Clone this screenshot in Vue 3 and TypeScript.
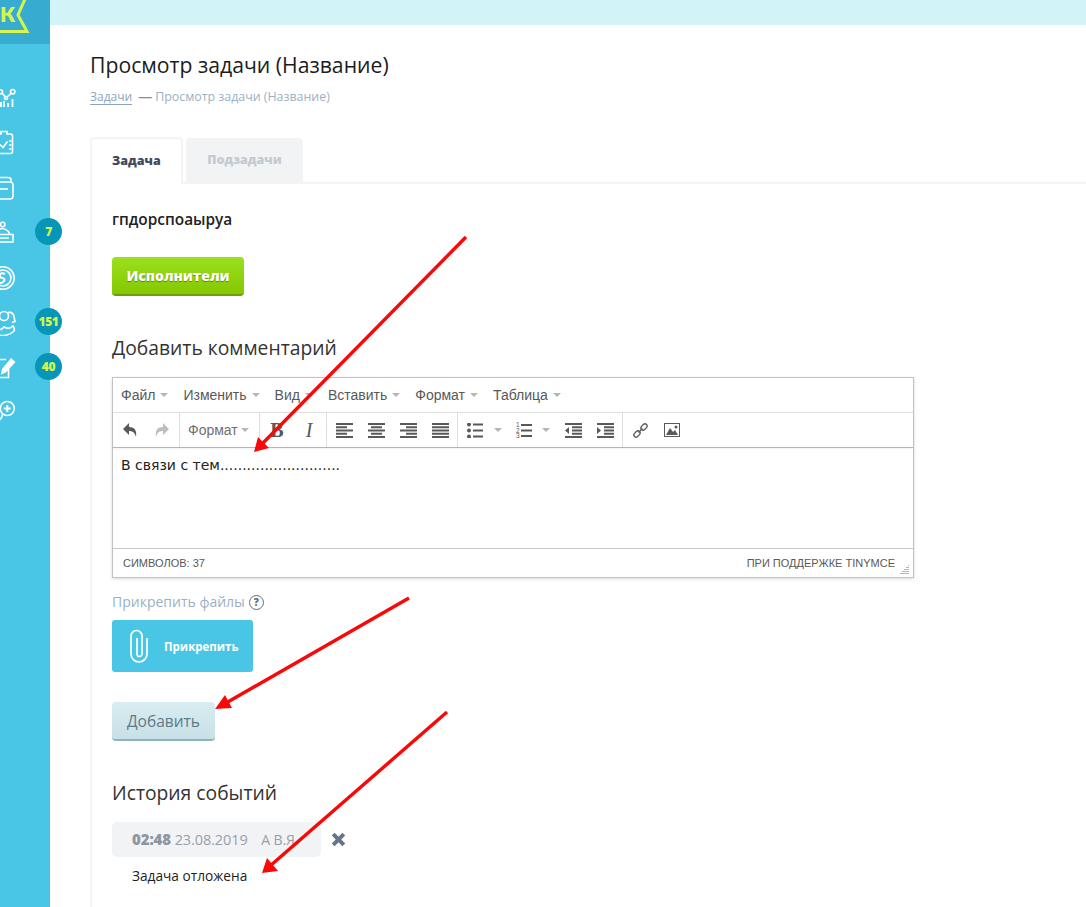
<script setup lang="ts">
const menus: string[] = ['Файл', 'Изменить', 'Вид', 'Вставить', 'Формат', 'Таблица']
const navBadges: Array<{ id: string; badge?: string }> = [
  { id: 'chart' }, { id: 'task' }, { id: 'box' }, { id: 'desk', badge: '7' },
  { id: 'coin' }, { id: 'people', badge: '151' }, { id: 'edit', badge: '40' }, { id: 'plus' },
]
const alignRows: Record<string, number[][]> = {
  left: [[0, 17], [0, 11], [0, 17], [0, 11], [0, 17]],
  center: [[0, 17], [3, 11], [0, 17], [3, 11], [0, 17]],
  right: [[0, 17], [6, 11], [0, 17], [6, 11], [0, 17]],
  full: [[0, 17], [0, 17], [0, 17], [0, 17], [0, 17]],
}
</script>

<template>
  <div class="page">
    <aside class="side">
      <div class="logo">
        <svg width="50" height="44" viewBox="0 0 50 44">
          <path d="M-8 31.500H27L18 15L25 -1" fill="none" stroke="#d6f64a" stroke-width="3" />
          <text x="0" y="22" class="logo-k">К</text>
        </svg>
      </div>
      <nav class="nav">
        <div v-for="n in navBadges" :key="n.id" class="nav-item">
          <svg class="nav-icon" width="26" height="26" viewBox="0 0 26 26" fill="none" stroke="#fff" stroke-width="1.6">
            <template v-if="n.id === 'chart'">
              <circle cx="22.700" cy="6.700" r="2.200" /><circle cx="10.500" cy="6.700" r="2" /><circle cx="16" cy="13" r="1.500" />
              <path d="M12 8l3 3.500M17 12l4.500-4" />
              <path d="M11 22v-5M14 22v-6M18 22v-4M22.500 22v-8" stroke-width="1.800" />
            </template>
            <template v-else-if="n.id === 'task'">
              <path d="M8 4h3V1.500h6V4h3.500q2 0 2 2v15.500q0 2-2 2H8" />
              <path d="M10 14.500l3 3 4.500-6M19 11h2.500M19 15h2.500M19 19h2.500" />
            </template>
            <template v-else-if="n.id === 'box'">
              <path d="M8 2.500H18q3 0 3 2.500V7" />
              <path d="M8 7H20q3 0 3 3V21q0 3-3 3H6" />
              <path d="M8 14H18" />
            </template>
            <template v-else-if="n.id === 'desk'">
              <circle cx="12.700" cy="4.500" r="2.200" />
              <path d="M6 11q6-5 12 0l2 3.500M4 14.500H23V22H4M7 18H19" />
            </template>
            <template v-else-if="n.id === 'coin'">
              <circle cx="13" cy="13" r="11.200" /><circle cx="13" cy="13" r="8" />
              <path d="M15 9q-4-2-5 1t3 3q3 2 0 4t-4 0" stroke-width="2" />
            </template>
            <template v-else-if="n.id === 'people'">
              <circle cx="14" cy="6" r="4.500" />
              <path d="M18 2.500q5-1 6 4l1 5-3 1" />
              <path d="M6 19q5 2 8-2 5 3 9-1 2 2 1 5-4 4-10 4.500-4 .5-8-1.500" />
            </template>
            <template v-else-if="n.id === 'edit'">
              <path d="M16 4.500H5M18.500 14V22.500H6" />
              <path d="M21 3L25.500 7L16 17.500L11 19.500L12 14z" fill="#fff" stroke="none" />
            </template>
            <template v-else>
              <circle cx="17.300" cy="8.500" r="7" />
              <path d="M17.300 5v7M13.800 8.500h7" stroke-width="2" />
              <path d="M12.500 14Q12 22 0 22" />
            </template>
          </svg>
          <span v-if="n.badge" class="badge">{{ n.badge }}</span>
        </div>
      </nav>
    </aside>

    <div class="main">
      <div class="topbar"></div>
      <div class="content">
        <h1 class="title">Просмотр задачи (Название)</h1>
        <div class="crumbs"><a class="crumb-link">Задачи</a><span class="crumb-dash">—</span><span>Просмотр задачи (Название)</span></div>

        <div class="tabs">
          <div class="tab active">Задача</div>
          <div class="tab">Подзадачи</div>
        </div>
        <div class="panel">
          <div class="task-name">гпдорспоаыруа</div>
          <button class="btn-green">Исполнители</button>
          <h2 class="h2 h-comment">Добавить комментарий</h2>

          <div class="editor">
            <div class="menubar">
              <span v-for="m in menus" :key="m" class="menu">{{ m }}<i class="caret"></i></span>
            </div>
            <div class="toolbar">
              <div class="group">
                <span class="tb"><svg width="16" height="16" viewBox="0 0 16 16"><path d="M7 1L1 7l6 6V9c4 0 6 2 7 6 1-6-1-10-7-10z" fill="#595959" /></svg></span>
                <span class="tb"><svg width="16" height="16" viewBox="0 0 16 16"><path d="M9 1l6 6-6 6V9c-4 0-6 2-7 6-1-6 1-10 7-10z" fill="#bdbdbd" /></svg></span>
              </div>
              <div class="group fmt"><span class="fmt-label">Формат</span><i class="caret"></i></div>
              <div class="group">
                <span class="tb letter bold">B</span>
                <span class="tb letter ital">I</span>
              </div>
              <div class="group">
                <span v-for="(rows, name) in alignRows" :key="name" class="tb">
                  <svg width="17" height="15" viewBox="0 0 17 15"><rect v-for="(r, i) in rows" :key="i" :x="r[0]" :y="i * 3.25" :width="r[1]" height="2" fill="#595959" /></svg>
                </span>
              </div>
              <div class="group">
                <span class="tb"><svg width="16" height="15" viewBox="0 0 16 15" fill="#595959"><circle cx="2" cy="1.500" r="2" /><circle cx="2" cy="7.500" r="2" /><circle cx="2" cy="13.500" r="2" /><rect x="6" y=".5" width="10" height="2" /><rect x="6" y="6.500" width="10" height="2" /><rect x="6" y="12.500" width="10" height="2" /></svg></span>
                <i class="caret c-bullet"></i>
                <span class="tb num"><svg width="16" height="16" viewBox="0 0 16 16" fill="#595959"><rect x="5" y="2" width="11" height="2" /><rect x="5" y="7.500" width="11" height="2" /><rect x="5" y="13" width="11" height="2" /><text x="0" y="5" class="mini">1</text><text x="0" y="10.500" class="mini">2</text><text x="0" y="16" class="mini">3</text></svg></span>
                <i class="caret c-num"></i>
                <span class="tb outdent"><svg width="17" height="15" viewBox="0 0 17 15" fill="#595959"><rect width="17" height="2" /><rect x="7" y="3.250" width="10" height="2" /><rect x="7" y="6.500" width="10" height="2" /><rect x="7" y="9.750" width="10" height="2" /><rect y="13" width="17" height="2" /><path d="M4 4v7L0 7.500z" /></svg></span>
                <span class="tb"><svg width="17" height="15" viewBox="0 0 17 15" fill="#595959"><rect width="17" height="2" /><rect x="7" y="3.250" width="10" height="2" /><rect x="7" y="6.500" width="10" height="2" /><rect x="7" y="9.750" width="10" height="2" /><rect y="13" width="17" height="2" /><path d="M0 4v7l4-3.500z" /></svg></span>
              </div>
              <div class="group last">
                <span class="tb"><svg width="17" height="17" viewBox="0 0 17 17" fill="none" stroke="#595959" stroke-width="1.300"><rect x="-3.500" y="-2.200" width="7" height="4.400" rx="2.200" transform="translate(5 12) rotate(-45)" /><rect x="-3.500" y="-2.200" width="7" height="4.400" rx="2.200" transform="translate(12 5) rotate(-45)" /><path d="M6.500 10.500l4-4" /></svg></span>
                <span class="tb"><svg width="16" height="14" viewBox="0 0 16 14"><rect x=".5" y=".5" width="15" height="13" fill="#fff" stroke="#595959" /><path d="M2 12l4-7 3 4 2-2 3 5z" fill="#595959" /><circle cx="12" cy="4" r="1.500" fill="#595959" /></svg></span>
              </div>
            </div>
            <div class="edit-area">В связи с тем...........................</div>
            <div class="status">
              <span>СИМВОЛОВ: 37</span>
              <span class="powered">ПРИ ПОДДЕРЖКЕ TINYMCE</span>
              <svg class="grip" width="10" height="10" viewBox="0 0 10 10" stroke="#b5b5b5"><path d="M8 1.500h1M6 3.500h3M4 5.500h5M2 7.500h7M0 9.500h9" /></svg>
            </div>
          </div>

          <div class="attach-label">Прикрепить файлы<span class="help">?</span></div>
          <button class="btn-attach">
            <svg width="20" height="36" viewBox="0 0 20 36" fill="none" stroke="#fff" stroke-width="1.700"><path d="M18 10V26a8 8 0 0 1-16 0V8a5.500 5.500 0 0 1 11 0V26a2.500 2.500 0 0 1-5 0V10" /></svg>
            <span>Прикрепить</span>
          </button>
          <button class="btn-add">Добавить</button>

          <h2 class="h2 h-history">История событий</h2>
          <div class="event">
            <div class="event-chip"><b>02:48</b> 23.08.2019 <span class="who">А В.Я.</span></div>
            <svg class="x" width="15" height="15" viewBox="0 0 15 15"><path d="M2.200 2.200l10.600 10.600M12.800 2.200L2.200 12.800" stroke="#66758a" stroke-width="4" /></svg>
          </div>
          <div class="event-text">Задача отложена</div>
        </div>
      </div>
    </div>

    <svg class="arrows" width="1086" height="907" viewBox="0 0 1086 907">
      <g stroke="#f80808" stroke-width="3.400">
        <path d="M466 237L262 444" />
        <path d="M409 598L226 703" />
        <path d="M447 712L270 866" />
      </g>
      <g fill="#f80808">
        <path d="M254 452L258 437L269 448z" />
        <path d="M215 709L225 695L232 708z" />
        <path d="M262 873L267 858L278 871z" />
      </g>
    </svg>
  </div>
</template>

<style>
html, body { margin: 0; background: #fff; }
</style>

<style scoped>
.page {
  position: relative;
  display: flex;
  width: 1086px;
  height: 907px;
  overflow: hidden;
  font-family: "Open Sans", "Noto Sans", sans-serif;
  background: #fff;
}
.side { width: 50px; flex: none; background: #49c6e5; position: relative; }
.logo { height: 44px; background: #38abd0; overflow: hidden; }
.logo svg { display: block; overflow: hidden; }
.logo-k { font: 800 21px "Lato", "Open Sans", sans-serif; fill: #d6f64a; }
.nav { padding-top: 31px; }
.nav-item { height: 45px; display: flex; align-items: center; position: relative; }
.nav-icon { margin-left: -10px; flex: none; }
.badge {
  position: absolute; left: 35px; top: 8px;
  width: 27px; height: 27px; border-radius: 50%;
  background: #0796b8; color: #d6f64a;
  display: flex; align-items: center; justify-content: center;
  font-size: 12px; font-weight: 800; letter-spacing: -.4px;
}
.main { flex: 1; min-width: 0; }
.topbar { height: 25px; background: #d2f3f7; }
.content { padding: 0 0 0 40px; }
.title { margin: 25px 0 0; font-size: 21.200px; line-height: 29px; font-weight: 400; color: #1c1c1c; }
.crumbs { margin-top: 8px; height: 20px; font-size: 12.400px; line-height: 19px; color: #9bb0c6; display: flex; }
.crumb-link { color: #8fa5bd; border-bottom: 1px solid #8fa5bd; height: 17px; font-size: 12px; }
.crumb-dash { margin: 0 3px 0 6px; color: #7f8c99; font-size: 14px; }
.tabs { display: flex; gap: 3px; margin-top: 29px; align-items: flex-end; }
.tab {
  height: 45px; box-sizing: border-box; padding: 0 21.500px 2px;
  background: #f1f3f5; border-radius: 4px 4px 0 0;
  font-size: 12.500px; font-weight: 800; color: #c3cad1;
  display: flex; align-items: center;
}
.tab.active {
  background: #fff; color: #414a5e; height: 47px;
  border: 2px solid #f3f4f5; border-bottom: 0; padding: 0 20px 2px;
  position: relative; top: 1px;
}
.panel { border-top: 2px solid #f3f4f5; border-left: 2px solid #f3f4f5; padding: 0 0 60px 20px; margin-top: -1px; }
.task-name { margin-top: 26px; font-size: 15.400px; line-height: 20px; font-weight: 600; color: #222; }
.btn-green {
  display: block; margin-top: 27px; width: 132px; height: 39px; padding: 0;
  border: 0; border-radius: 4px; border-bottom: 2px solid #6d9e05;
  background: linear-gradient(#9be01d, #84c802);
  color: #fff; font: 800 14px "Open Sans", sans-serif; text-shadow: 0 1px 1px rgba(0,0,0,.35);
}
.h2 { margin: 0; font-size: 19.300px; line-height: 26px; font-weight: 400; color: #333; }
.h-comment { margin-top: 39px; }
.editor {
  margin-top: 16px; width: 802px; box-sizing: border-box;
  border: 1px solid #c2c2c2; box-shadow: 0 1px 3px rgba(0,0,0,.15);
  font-family: "Liberation Sans", Arial, sans-serif; color: #595959;
}
.menubar { height: 34px; border-bottom: 1px solid #dedede; display: flex; align-items: center; padding-left: 8px; gap: 15px; font-size: 14px; }
.menu { display: inline-flex; align-items: center; }
.caret { display: inline-block; width: 0; height: 0; border: 4.500px solid transparent; border-top: 4.500px solid #b5b5b5; border-bottom: 0; margin-left: 5px; }
.toolbar { height: 34px; border-bottom: 1px solid #b5b5b5; display: flex; box-shadow: 0 1px 2px rgba(0,0,0,.06); }
.group { display: flex; align-items: center; border-right: 1px solid #dedede; padding: 0 1px; }
.group.last { border-right: 0; }
.tb { width: 32px; height: 34px; display: flex; align-items: center; justify-content: center; }
.tb.num { width: 30px; margin-left: 7.500px; }
.tb.outdent { margin-left: 7.500px; }
.c-bullet, .c-num { margin-left: 2.500px; }
.fmt { width: 80px; padding: 0 0 0 8px; box-sizing: border-box; font-size: 14px; color: #707070; }
.fmt .caret { margin-left: 3px; }
.letter { font: 20px "Liberation Serif", serif; color: #595959; }
.bold { font-weight: 700; }
.ital { font-style: italic; }
.mini { font: 6.500px "Liberation Sans", sans-serif; }
.edit-area { height: 101px; box-sizing: border-box; padding: 8px; font: 14px/19px "DejaVu Sans", Verdana, sans-serif; color: #222; border-bottom: 1px solid #c9c9c9; }
.status { height: 28px; display: flex; align-items: center; justify-content: space-between; padding: 0 10px; font-size: 11px; color: #595959; position: relative; }
.powered { margin-right: 8px; }
.grip { position: absolute; right: 3px; bottom: 3px; }
.attach-label { margin-top: 14px; height: 20px; font-size: 14px; line-height: 20px; color: #9bb0c6; font-weight: 500; display: flex; align-items: center; gap: 4px; }
.help { width: 13px; height: 13px; border: 1.500px solid #5f6f7c; border-radius: 50%; color: #5f6f7c; font-size: 10px; font-weight: 800; display: flex; align-items: center; justify-content: center; }
.btn-attach {
  display: flex; align-items: center; gap: 15px; margin-top: 8px; width: 141px; height: 52px; padding: 0 0 0 17px;
  border: 0; border-radius: 3px; background: #49c6e5; color: #fff; font: 700 11.500px "Open Sans", sans-serif;
}
.btn-add {
  display: block; margin-top: 30px; width: 103px; height: 39px; padding: 1px 0 0;
  border: 0; border-radius: 4px; border-bottom: 2px solid #8fb4bf;
  background: linear-gradient(#d9edf1, #c7e0e7);
  color: #5d7b88; font: 400 15.500px "Open Sans", sans-serif;
}
.h-history { margin-top: 39px; }
.event { margin-top: 16px; display: flex; align-items: center; gap: 10px; }
.event-chip {
  width: 209px; height: 35px; box-sizing: border-box; padding-left: 20px; border-radius: 5px;
  background: #f1f3f5; color: #9a9fa8; font-size: 14.500px; line-height: 35px; white-space: nowrap; letter-spacing: -.1px;
}
.event-chip b { font-weight: 800; color: #8f96a0; font-size: 15px; }
.who { margin-left: 10px; font-size: 14px; }
.event-text { margin-top: 10px; padding-left: 20px; font-size: 13.700px; line-height: 18px; color: #1e1e1e; }
.arrows { position: absolute; left: 0; top: 0; pointer-events: none; }
</style>
